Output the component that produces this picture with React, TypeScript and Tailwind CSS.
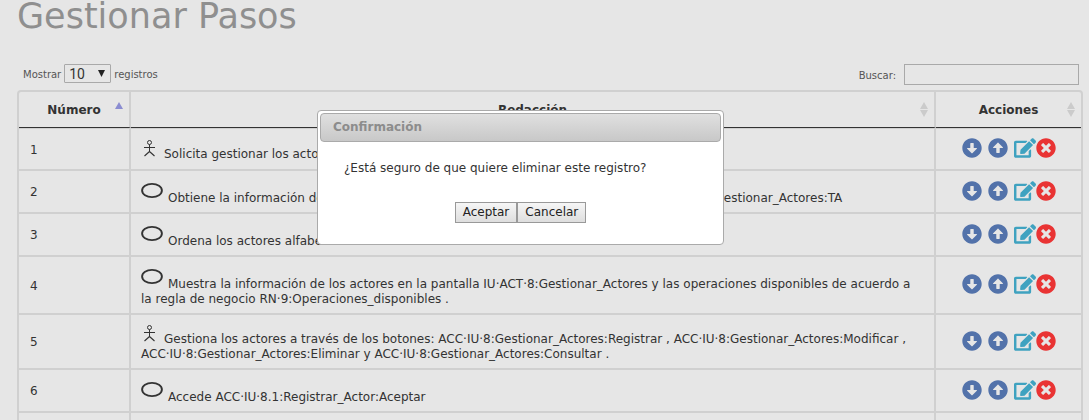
import React from "react";
import {
  FaArrowAltCircleDown,
  FaArrowAltCircleUp,
  FaEdit,
  FaTimesCircle,
} from "react-icons/fa";

type Step = { id: number; kind: "actor" | "system"; text: string };

const steps: Step[] = [
  { id: 1, kind: "actor", text: "Solicita gestionar los actores" },
  {
    id: 2,
    kind: "system",
    text: "Obtiene la información de los actores registrados y muestra completa la pantalla IU·ACT·8:Gestionar_Actores:TA",
  },
  { id: 3, kind: "system", text: "Ordena los actores alfabéticamente" },
  {
    id: 4,
    kind: "system",
    text: "Muestra la información de los actores en la pantalla IU·ACT·8:Gestionar_Actores y las operaciones disponibles de acuerdo a la regla de negocio RN·9:Operaciones_disponibles .",
  },
  {
    id: 5,
    kind: "actor",
    text: "Gestiona los actores a través de los botones: ACC·IU·8:Gestionar_Actores:Registrar , ACC·IU·8:Gestionar_Actores:Modificar , ACC·IU·8:Gestionar_Actores:Eliminar y ACC·IU·8:Gestionar_Actores:Consultar .",
  },
  { id: 6, kind: "system", text: "Accede ACC·IU·8.1:Registrar_Actor:Aceptar" },
];

function ActorIcon() {
  return (
    <svg viewBox="0 0 18 17" className="mr-[5px] inline-block h-[17px] w-[18px] overflow-visible align-baseline" fill="none" stroke="#333" aria-hidden="true">
      <circle cx="8.5" cy="1.5" r="2" strokeWidth="1" />
      <path d="M3 6.5H14M8.5 3.5V10.5" strokeWidth="1" />
      <path d="M8.5 10.5L3.5 15M8.5 10.5L13.5 15" strokeWidth="1.1" />
    </svg>
  );
}

function SystemIcon() {
  return (
    <svg viewBox="0 0 22 20" className="mr-[5px] inline-block h-5 w-[22px] align-baseline" fill="none" stroke="#333" aria-hidden="true">
      <ellipse cx="11" cy="8.5" rx="9.9" ry="6.6" strokeWidth="1.9" />
    </svg>
  );
}

function SortBoth() {
  return (
    <svg viewBox="0 0 8 15" className="absolute top-[10px] right-[6px] h-[15px] w-2" fill="#cbcbcb" aria-hidden="true">
      <path d="M4 0L8 7H0ZM4 15L8 8H0Z" />
    </svg>
  );
}

function SortAsc() {
  return (
    <svg viewBox="0 0 8 15" className="absolute top-[10px] right-[6px] h-[15px] w-2" fill="#8b8dd1" aria-hidden="true">
      <path d="M4 0L8 7H0Z" />
    </svg>
  );
}

function Actions({ id }: { id: number }) {
  return (
    <div className="flex items-center justify-center">
      <button type="button" aria-label={`Bajar paso ${id}`} className="mr-1.5 text-[#5272aa]">
        <FaArrowAltCircleDown className="h-5 w-5" />
      </button>
      <button type="button" aria-label={`Subir paso ${id}`} className="mr-1.5 text-[#5272aa]">
        <FaArrowAltCircleUp className="h-5 w-5" />
      </button>
      <button type="button" aria-label={`Editar paso ${id}`} className="text-[#3fa2c0]">
        <FaEdit className="h-5 w-[22px]" />
      </button>
      <button type="button" aria-label={`Eliminar paso ${id}`} className="text-[#e93434]">
        <FaTimesCircle className="h-5 w-5" />
      </button>
    </div>
  );
}

const th = "relative h-[36px] border-b border-b-[#333] p-0 pt-0.5 text-center font-bold";
const td = "h-[43px] border-b-2 border-[#d0d0d0] group-first:border-t";

export default function App() {
  return (
    <main className="relative h-screen overflow-hidden bg-[#e6e6e6] pr-1.5 pl-[17px] font-['DejaVu_Sans',Verdana,sans-serif] text-xs leading-[15px] text-[#333]">
      <h1 className="text-[35px] leading-8 text-[#8f8f8f]">Gestionar Pasos</h1>

      <div className="mt-8 flex items-start justify-between pr-1 pl-1.5 text-[10px] text-[#555]">
        <div className="flex items-center gap-[3px]">
          <label htmlFor="page-size" className="pt-0.5">Mostrar</label>
          <div className="relative">
            <select
              id="page-size"
              defaultValue="10"
              className="block h-[19px] w-[47px] appearance-none rounded-[1px] border border-[#a9a9a9] bg-transparent px-1 font-[Roboto,sans-serif] text-sm leading-4 text-[#333]"
            >
              <option>10</option>
              <option>25</option>
            </select>
            <svg viewBox="0 0 7 7" className="pointer-events-none absolute top-1.5 right-1.5 h-[7px] w-[7px]" fill="#222" aria-hidden="true">
              <path d="M0 0H7L3.5 7Z" />
            </svg>
          </div>
          <span className="pt-0.5">registros</span>
        </div>
        <div className="flex items-center gap-2">
          <label htmlFor="search" className="pt-0.5">Buscar:</label>
          <input id="search" type="search" className="h-[21px] w-[175px] border border-[#a9a9a9] bg-transparent px-1 text-xs" />
        </div>
      </div>

      <div className="mt-[5px] rounded-sm border-2 border-[#d0d0d0]">
        <table className="w-full table-fixed border-separate border-spacing-0">
          <colgroup>
            <col className="w-[112px]" />
            <col />
            <col className="w-[145px]" />
          </colgroup>
          <thead>
            <tr>
              <th className={`${th} border-r-2 border-r-[#d0d0d0]`}>Número<SortAsc /></th>
              <th className={`${th} border-r-2 border-r-[#d0d0d0]`}>Redacción<SortBoth /></th>
              <th className={th}>Acciones<SortBoth /></th>
            </tr>
          </thead>
          <tbody>
            {steps.map((s) => (
              <tr key={s.id} className="group">
                <td className={`${td} border-r-2 pt-0.5 pl-[11px]`}>{s.id}</td>
                <td className={`${td} border-r-2 pt-[11px] pr-4 pb-1.5 pl-2.5`}>
                  {s.kind === "actor" ? <ActorIcon /> : <SystemIcon />}
                  {s.text}
                </td>
                <td className={`${td} pb-0.5`}>
                  <Actions id={s.id} />
                </td>
              </tr>
            ))}
            <tr>
              <td className={`${td} border-r-2`} />
              <td className={`${td} border-r-2`} />
              <td className={td} />
            </tr>
          </tbody>
        </table>
      </div>

      <div
        role="dialog"
        aria-labelledby="confirm-title"
        className="absolute top-[110px] left-[317px] w-[407px] rounded border border-[#aaa] bg-white p-0.5 pb-[21px] text-[#333]"
      >
        <h2
          id="confirm-title"
          className="rounded border border-[#aaa] bg-linear-to-b from-[#e0e0e0] to-[#c8c8c8] px-3 py-1.5 font-bold leading-[15px] text-[#8c8c8c]"
        >
          Confirmación
        </h2>
        <p className="mt-[19px] px-6">¿Está seguro de que quiere eliminar este registro?</p>
        <div className="mt-[26px] flex justify-center">
          <button type="button" className="h-[21px] border border-[#999] bg-linear-to-b from-[#f6f6f6] to-[#dedede] px-[7px] text-[#222]">
            Aceptar
          </button>
          <button type="button" className="h-[21px] border border-[#999] bg-linear-to-b from-[#f6f6f6] to-[#dedede] px-[7px] text-[#222]">
            Cancelar
          </button>
        </div>
      </div>
    </main>
  );
}
